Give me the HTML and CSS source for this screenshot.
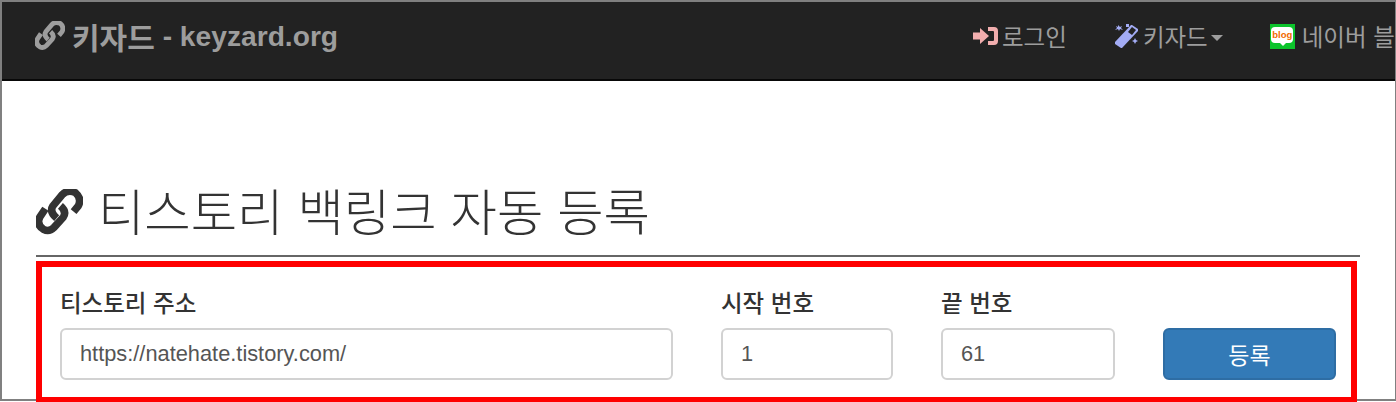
FILE: index.html
```html
<!DOCTYPE html>
<html lang="ko">
<head>
    <meta charset="UTF-8">
    <meta name="viewport" content="width=device-width, initial-scale=1.0">
    <title>티스토리 백링크 자동 등록 - keyzard.org</title>
    <link rel="stylesheet" href="styles.css">
</head>
<body>
    <svg class="defs" width="0" height="0">
        <symbol id="chain" viewBox="14 8 50 50">
            <path d="M54 32 L59 26 Q63 18 56 12 Q48 8 42 14 L32 26 Q28 32 36 39" />
            <path d="M24 29 L18 38 Q14 46 22 51 Q28 54 33 49 L43 38 Q47 32 40 26" />
        </symbol>
    </svg>

    <div class="frame">
        <!-- Navbar -->
        <div class="navbar">
            <a class="brand"><svg class="brand-icon"><use href="#chain"></use></svg><span class="brand-ko">키자드</span>&nbsp;- keyzard.org</a>
            <div class="nav-items">
                <a class="nav-item">
                    <svg class="nav-icon" viewBox="0 0 25 24" fill="#f2aeae">
                        <path d="M0 8.500h7V4l9 8-9 8v-4.500H0z" />
                        <path d="M15 3h6q4 0 4 4v10q0 4-4 4h-6v-4h5q1 0 1-1V8q0-1-1-1h-5z" />
                    </svg>
                    로그인
                </a>
                <a class="nav-item">
                    <svg class="nav-icon" viewBox="0 0 25 24" fill="#a3acf5">
                        <path d="M17 1l1 0 6 4v2L8 24H7l-6-4v-2z" />
                        <path d="M14 8l4 3 4-5-4-3z" fill="#222" />
                        <path d="M4 1l2 2 2-1-1 2 2 2-3-1-1 2-1-2-3 1 2-2-1-2 2 1zM12 0h3v3h-3zM21 14l1 2 2 1-2 1-1 2-1-2-2-1 2-1z" />
                    </svg>
                    키자드<span class="caret"></span>
                </a>
                <a class="nav-item">
                    <span class="blog-icon"><span class="blog-bubble">blog</span></span>
                    네이버 블로그
                </a>
            </div>
        </div>

        <!-- Page -->
        <div class="content">
            <h1 class="title"><svg class="title-icon"><use href="#chain"></use></svg>티스토리 백링크 자동 등록</h1>
            <form class="reg-form">
                <div class="field field-url">
                    <label>티스토리 주소</label>
                    <input type="text" value="https://natehate.tistory.com/">
                </div>
                <div class="field field-start">
                    <label>시작 번호</label>
                    <input type="text" value="1">
                </div>
                <div class="field field-end">
                    <label>끝 번호</label>
                    <input type="text" value="61">
                </div>
                <div class="field field-btn">
                    <button type="button">등록</button>
                </div>
            </form>
        </div>
    </div>
</body>
</html>
```

FILE: styles.css
```css
* { box-sizing: border-box; }
html, body { margin: 0; padding: 0; height: 402px; overflow: hidden; background: #fff; }
body { font-family: "Liberation Sans", "Noto Sans CJK KR", sans-serif; color: #333; }
.defs { display: block; height: 0; }
.frame { width: 1396px; height: 401px; border: solid #808080; border-width: 2px 1px 2px 2px; }

.navbar { height: 79px; background: #222; border-bottom: 2px solid #080808; display: flex; justify-content: space-between; overflow: hidden; white-space: nowrap; }
.brand { display: flex; align-items: center; padding-left: 33px; padding-bottom: 9px; font-size: 28.2px; font-weight: bold; color: #9d9d9d; }
.brand-ko { font-size: 30px; }
.brand-icon { width: 30px; height: 30px; margin-right: 7px; fill: none; stroke: #9d9d9d; stroke-width: 8; }
.nav-items { display: flex; flex: none; width: 422px; }
.nav-item { display: flex; align-items: center; margin-right: 47px; padding-bottom: 9px; font-size: 23.5px; color: #9d9d9d; flex: none; }
.nav-icon { width: 25px; height: 24px; margin-right: 4px; flex: none; }
.caret { width: 0; height: 0; margin: 3px 0 0 3px; border-top: 6px solid #9d9d9d; border-left: 6px solid transparent; border-right: 6px solid transparent; }
.blog-icon { position: relative; width: 25px; height: 25px; margin-right: 7px; background: #0cc42c; display: flex; justify-content: center; padding-top: 3px; }
.blog-bubble { width: 22px; height: 16px; background: #fff; border-radius: 4px; color: #f26a00; font-size: 9.500px; font-weight: bold; line-height: 15px; text-align: center; }
.blog-icon::after { content: ""; position: absolute; left: 10px; bottom: 3px; border-top: 3px solid #fff; border-left: 3px solid transparent; border-right: 3px solid transparent; }

.content { padding: 0 0 0 34px; }
.title { display: flex; align-items: center; width: 1324px; height: 97px; margin: 79px 0 0; padding-top: 4px; border-bottom: 2px solid #666; font-size: 50.4px; font-weight: 300; color: #333; }
.title-icon { width: 47px; height: 47px; margin: 5px 15px 0 0; fill: none; stroke: #333; stroke-width: 8; }

.reg-form { display: flex; gap: 48px; width: 1321px; height: 142px; margin-top: 4px; padding: 24px 0 0 18px; border: 6px solid #f00; }
.field { display: flex; flex-direction: column; justify-content: flex-end; height: 89px; flex: none; }
.field label { font-size: 23.5px; font-weight: 500; line-height: 26px; margin-bottom: 11px; color: #333; }
.field input { height: 52px; flex: none; width: 100%; padding: 0 18px; font-family: inherit; font-size: 21.8px; color: #555; background: #fff; border: 2px solid #d2d2d2; border-radius: 6px; }
.field-url { width: 613px; }
.field-start { width: 172px; }
.field-end { width: 174px; }
.field-btn { width: 173px; }
.field-btn button { height: 52px; flex: none; width: 100%; font-family: inherit; font-size: 23px; color: #fff; background: #337ab7; border: 2px solid #2e6da4; border-radius: 6px; }
```
